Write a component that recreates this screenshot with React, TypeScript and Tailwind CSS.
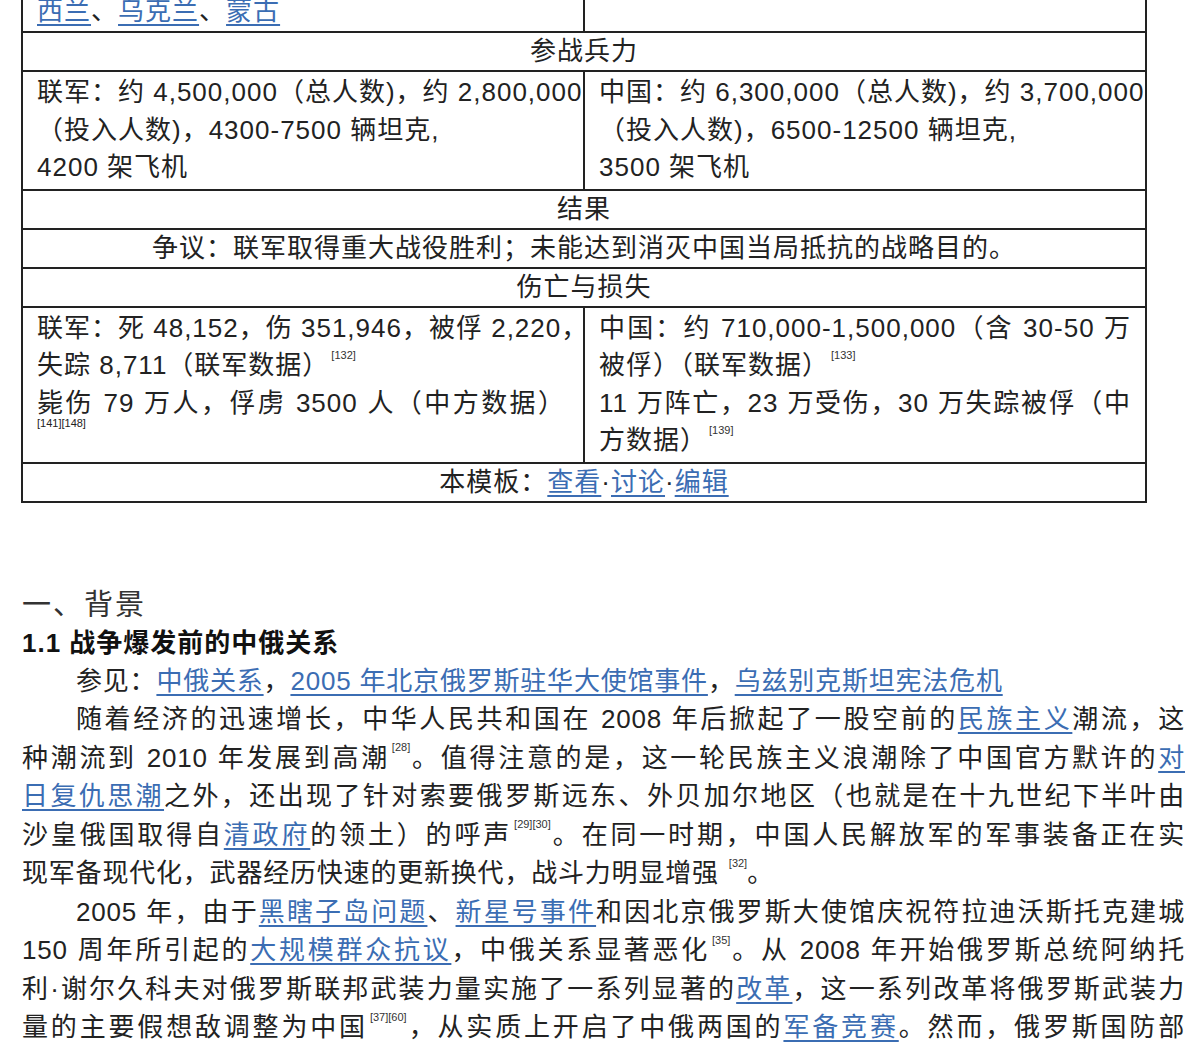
import React from "react";

const F = { fontFamily: '"Liberation Sans","Noto Sans CJK SC",sans-serif' };
const A = ({ children }: { children: React.ReactNode }) => (
  <span className="text-[#3b6db3] underline underline-offset-[4px] decoration-[1.5px]">{children}</span>
);
const S = ({ children }: { children: React.ReactNode }) => (
  <sup className="text-[11px] tracking-normal align-[10px] text-[#333] ml-[2px]">{children}</sup>
);
const J = ({ children, last }: { children: React.ReactNode; last?: boolean }) => (
  <div className={last ? "whitespace-nowrap" : "whitespace-nowrap [text-align:justify] [text-align-last:justify]"}>{children}</div>
);

export default function App() {
  return (
    <div style={F} className="bg-white w-[1200px] h-[1048px] overflow-hidden text-[#222]">
      <div className="ml-[21px] w-[1126px] -mt-[9px] border-2 border-[#222] text-[26px] tracking-[1px] leading-[37.5px]">
        <div className="grid grid-cols-[562px_1fr] border-b-2 border-[#222]">
          <div className="border-r-2 border-[#222] px-[14px] h-[38px]"><A>西兰</A>、<A>乌克兰</A>、<A>蒙古</A></div>
          <div />
        </div>
        <div className="text-center border-b-2 border-[#222] h-[39px]">参战兵力</div>
        <div className="grid grid-cols-[562px_1fr] border-b-2 border-[#222]">
          <div className="border-r-2 border-[#222] pl-[14px] pr-[10px] py-[2px]">
            <div className="whitespace-nowrap">联军：约 4,500,000（总人数)，约 2,800,000</div>
            <div>（投入人数)，4300-7500 辆坦克,</div>
            <div>4200 架飞机</div>
          </div>
          <div className="pl-[14px] pr-[10px] py-[2px]">
            <div className="whitespace-nowrap">中国：约 6,300,000（总人数)，约 3,700,000</div>
            <div>（投入人数)，6500-12500 辆坦克,</div>
            <div>3500 架飞机</div>
          </div>
        </div>
        <div className="text-center border-b-2 border-[#222] h-[39px]">结果</div>
        <div className="text-center border-b-2 border-[#222] h-[39px]">争议：联军取得重大战役胜利；未能达到消灭中国当局抵抗的战略目的。</div>
        <div className="text-center border-b-2 border-[#222] h-[39px]">伤亡与损失</div>
        <div className="grid grid-cols-[562px_1fr] border-b-2 border-[#222]">
          <div className="border-r-2 border-[#222] pl-[14px] pr-[18px] py-[2px]">
            <J>联军：死 48,152，伤 351,946，被俘 2,220，</J>
            <div>失踪 8,711（联军数据）<S>[132]</S></div>
            <J>毙伤 79 万人，俘虏 3500 人（中方数据）</J>
            <div className="text-[11px] tracking-normal leading-[14px] -mt-[6px]">[141][148]</div>
          </div>
          <div className="pl-[14px] pr-[14px] py-[2px]">
            <J>中国：约 710,000-1,500,000（含 30-50 万</J>
            <div>被俘）（联军数据）<S>[133]</S></div>
            <J>11 万阵亡，23 万受伤，30 万失踪被俘（中</J>
            <div>方数据）<S>[139]</S></div>
          </div>
        </div>
        <div className="text-center h-[37px]">本模板：<A>查看</A>·<A>讨论</A>·<A>编辑</A></div>
      </div>

      <div className="ml-[22px] w-[1163px] mt-[82px]">
        <div className="text-[29px] tracking-[2px] leading-[40px] text-[#333]">一、背景</div>
        <div className="text-[26px] tracking-[1px] leading-[38px] font-bold text-[#111] -mt-[1px]">1.1 战争爆发前的中俄关系</div>
        <div className="text-[26px] tracking-[0.8px] leading-[38.5px]">
          <div className="pl-[54px] whitespace-nowrap">参见：<A>中俄关系</A>，<A>2005 年北京俄罗斯驻华大使馆事件</A>，<A>乌兹别克斯坦宪法危机</A></div>
          <J><span className="pl-[54px]" />随着经济的迅速增长，中华人民共和国在 2008 年后掀起了一股空前的<A>民族主义</A>潮流，这</J>
          <J>种潮流到 2010 年发展到高潮<S>[28]</S>。值得注意的是，这一轮民族主义浪潮除了中国官方默许的<A>对</A></J>
          <J><A>日复仇思潮</A>之外，还出现了针对索要俄罗斯远东、外贝加尔地区（也就是在十九世纪下半叶由</J>
          <J>沙皇俄国取得自<A>清政府</A>的领土）的呼声<S>[29][30]</S>。在同一时期，中国人民解放军的军事装备正在实</J>
          <div>现军备现代化，武器经历快速的更新换代，战斗力明显增强 <S>[32]</S>。</div>
          <J><span className="pl-[54px]" />2005 年，由于<A>黑瞎子岛问题</A>、<A>新星号事件</A>和因北京俄罗斯大使馆庆祝符拉迪沃斯托克建城</J>
          <J>150 周年所引起的<A>大规模群众抗议</A>，中俄关系显著恶化<S>[35]</S>。从 2008 年开始俄罗斯总统阿纳托</J>
          <J>利·谢尔久科夫对俄罗斯联邦武装力量实施了一系列显著的<A>改革</A>，这一系列改革将俄罗斯武装力</J>
          <J>量的主要假想敌调整为中国<S>[37][60]</S>，从实质上开启了中俄两国的<A>军备竞赛</A>。然而，俄罗斯国防部</J>
        </div>
      </div>
    </div>
  );
}
